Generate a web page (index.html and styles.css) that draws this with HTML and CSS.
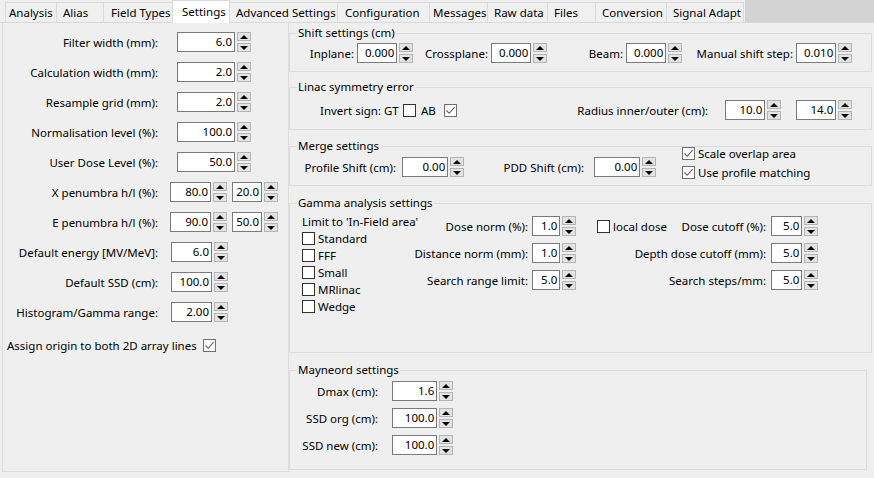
FILE: index.html
```html
<!DOCTYPE html>
<html>
<head>
<meta charset="utf-8">
<title>Settings</title>
<link rel="stylesheet" href="styles.css">
</head>
<body>
<div class="window">
  <div class="tabs">
    <div class="tab tight">Analysis</div>
    <div class="tab">Alias</div>
    <div class="tab pad8">Field Types</div>
    <div class="tab active">Settings</div>
    <div class="tab">Advanced Settings</div>
    <div class="tab pad8">Configuration</div>
    <div class="tab tight">Messages</div>
    <div class="tab">Raw data</div>
    <div class="tab">Files</div>
    <div class="tab">Conversion</div>
    <div class="tab">Signal Adapt</div>
    <div class="tab-fill"></div>
  </div>

  <div class="page">
    <div class="left-panel">
      <div class="form-grid">
        <div class="lbl">Filter width (mm):</div>
        <div class="spin w58 ml19"><div class="box">6.0</div><div class="arrows"><span class="up"></span><span class="dn"></span></div></div>

        <div class="lbl">Calculation width (mm):</div>
        <div class="spin w58 ml19"><div class="box">2.0</div><div class="arrows"><span class="up"></span><span class="dn"></span></div></div>

        <div class="lbl">Resample grid (mm):</div>
        <div class="spin w58 ml19"><div class="box">2.0</div><div class="arrows"><span class="up"></span><span class="dn"></span></div></div>

        <div class="lbl">Normalisation level (%):</div>
        <div class="spin w58 ml19"><div class="box">100.0</div><div class="arrows"><span class="up"></span><span class="dn"></span></div></div>

        <div class="lbl">User Dose Level (%):</div>
        <div class="spin w58 ml19"><div class="box">50.0</div><div class="arrows"><span class="up"></span><span class="dn"></span></div></div>

        <div class="lbl">X penumbra h/l (%):</div>
        <div class="pair ml12">
          <div class="spin w41"><div class="box">80.0</div><div class="arrows"><span class="up"></span><span class="dn"></span></div></div>
          <div class="spin w30"><div class="box">20.0</div><div class="arrows"><span class="up"></span><span class="dn"></span></div></div>
        </div>

        <div class="lbl">E penumbra h/l (%):</div>
        <div class="pair ml12">
          <div class="spin w41"><div class="box">90.0</div><div class="arrows"><span class="up"></span><span class="dn"></span></div></div>
          <div class="spin w30"><div class="box">50.0</div><div class="arrows"><span class="up"></span><span class="dn"></span></div></div>
        </div>

        <div class="lbl">Default energy [MV/MeV]:</div>
        <div class="spin w41 ml13"><div class="box">6.0</div><div class="arrows"><span class="up"></span><span class="dn"></span></div></div>

        <div class="lbl">Default SSD (cm):</div>
        <div class="spin w41 ml13"><div class="box">100.0</div><div class="arrows"><span class="up"></span><span class="dn"></span></div></div>

        <div class="lbl">Histogram/Gamma range:</div>
        <div class="spin w41 ml13"><div class="box">2.00</div><div class="arrows"><span class="up"></span><span class="dn"></span></div></div>
      </div>
      <div class="assign">
        <span>Assign origin to both 2D array lines</span>
        <span class="cb on"><svg viewBox="0 0 11 11" width="11" height="11"><path d="M1.5 5.5 L4.2 8.3 L9.6 2.2" fill="none" stroke="#5f5f5f" stroke-width="1.1"/></svg></span>
      </div>
    </div>

    <div class="right-col">
      <fieldset class="group shift">
        <legend>Shift settings (cm)</legend>
        <div class="row shift-row">
          <div class="lbl-r p3">Inplane:</div>
          <div class="spin w41"><div class="box">0.000</div><div class="arrows"><span class="up"></span><span class="dn"></span></div></div>
          <div class="lbl-r p3">Crossplane:</div>
          <div class="spin w41"><div class="box">0.000</div><div class="arrows"><span class="up"></span><span class="dn"></span></div></div>
          <div class="lbl-r p3">Beam:</div>
          <div class="spin w41"><div class="box">0.000</div><div class="arrows"><span class="up"></span><span class="dn"></span></div></div>
          <div class="lbl-r p3">Manual shift step:</div>
          <div class="spin w41"><div class="box">0.010</div><div class="arrows"><span class="up"></span><span class="dn"></span></div></div>
        </div>
      </fieldset>

      <fieldset class="group linac">
        <legend>Linac symmetry error</legend>
        <div class="row linac-row">
          <div class="invert">Invert sign: GT</div>
          <span class="cb"></span>
          <div>AB</div>
          <span class="cb on"><svg viewBox="0 0 11 11" width="11" height="11"><path d="M1.5 5.5 L4.2 8.3 L9.6 2.2" fill="none" stroke="#5f5f5f" stroke-width="1.1"/></svg></span>
          <div class="lbl-r p17">Radius inner/outer (cm):</div>
          <div class="spin w41"><div class="box">10.0</div><div class="arrows"><span class="up"></span><span class="dn"></span></div></div>
          <div></div>
          <div class="spin w41"><div class="box">14.0</div><div class="arrows"><span class="up"></span><span class="dn"></span></div></div>
        </div>
      </fieldset>

      <fieldset class="group merge">
        <legend>Merge settings</legend>
        <div class="row merge-row">
          <div class="lbl-r p6">Profile Shift (cm):</div>
          <div class="spin w47"><div class="box">0.00</div><div class="arrows"><span class="up"></span><span class="dn"></span></div></div>
          <div class="lbl-r p10">PDD Shift (cm):</div>
          <div class="spin w47"><div class="box">0.00</div><div class="arrows"><span class="up"></span><span class="dn"></span></div></div>
          <div></div>
          <div class="checks">
            <div class="check-line"><span class="cb on"><svg viewBox="0 0 11 11" width="11" height="11"><path d="M1.5 5.5 L4.2 8.3 L9.6 2.2" fill="none" stroke="#5f5f5f" stroke-width="1.1"/></svg></span><span>Scale overlap area</span></div>
            <div class="check-line"><span class="cb on"><svg viewBox="0 0 11 11" width="11" height="11"><path d="M1.5 5.5 L4.2 8.3 L9.6 2.2" fill="none" stroke="#5f5f5f" stroke-width="1.1"/></svg></span><span>Use profile matching</span></div>
          </div>
        </div>
      </fieldset>

      <fieldset class="group gamma">
        <legend>Gamma analysis settings</legend>
        <div class="gamma-body">
          <div class="limit-list">
            <div class="check-line">Limit to 'In-Field area'</div>
            <div class="check-line"><span class="cb"></span><span>Standard</span></div>
            <div class="check-line"><span class="cb"></span><span>FFF</span></div>
            <div class="check-line"><span class="cb"></span><span>Small</span></div>
            <div class="check-line"><span class="cb"></span><span>MRlinac</span></div>
            <div class="check-line"><span class="cb"></span><span>Wedge</span></div>
          </div>
          <div class="gamma-grid">
            <div class="lbl-r p4">Dose norm (%):</div>
            <div class="spin w29"><div class="box">1.0</div><div class="arrows"><span class="up"></span><span class="dn"></span></div></div>
            <div class="local"><span class="cb"></span><span>local dose</span></div>
            <div class="lbl-r p5">Dose cutoff (%):</div>
            <div class="spin w32"><div class="box">5.0</div><div class="arrows"><span class="up"></span><span class="dn"></span></div></div>

            <div class="lbl-r p4">Distance norm (mm):</div>
            <div class="spin w29"><div class="box">1.0</div><div class="arrows"><span class="up"></span><span class="dn"></span></div></div>
            <div class="lbl-r p5 span2">Depth dose cutoff (mm):</div>
            <div class="spin w32"><div class="box">5.0</div><div class="arrows"><span class="up"></span><span class="dn"></span></div></div>

            <div class="lbl-r p4">Search range limit:</div>
            <div class="spin w29"><div class="box">5.0</div><div class="arrows"><span class="up"></span><span class="dn"></span></div></div>
            <div class="lbl-r p5 span2">Search steps/mm:</div>
            <div class="spin w32"><div class="box">5.0</div><div class="arrows"><span class="up"></span><span class="dn"></span></div></div>
          </div>
        </div>
      </fieldset>

      <fieldset class="group mayneord">
        <legend>Mayneord settings</legend>
        <div class="may-grid">
          <div class="lbl-r p14">Dmax (cm):</div>
          <div class="spin w46"><div class="box">1.6</div><div class="arrows"><span class="up"></span><span class="dn"></span></div></div>
          <div class="lbl-r p14">SSD org (cm):</div>
          <div class="spin w46"><div class="box">100.0</div><div class="arrows"><span class="up"></span><span class="dn"></span></div></div>
          <div class="lbl-r p14">SSD new (cm):</div>
          <div class="spin w46"><div class="box">100.0</div><div class="arrows"><span class="up"></span><span class="dn"></span></div></div>
        </div>
      </fieldset>
    </div>
  </div>
</div>
</body>
</html>
```

FILE: styles.css
```css
* { box-sizing: border-box; }

html, body {
  margin: 0;
  padding: 0;
}

body {
  background: #efefef;
  font-family: "Noto Sans", "Open Sans", sans-serif;
  font-size: 11.5px;
  color: #000;
  width: 874px;
  height: 478px;
  overflow: hidden;
}

.window {
  display: flex;
  flex-direction: column;
  height: 478px;
}

/* ---------- tabs ---------- */
.tabs {
  display: grid;
  grid-template-columns: 52px 47px 69px 57px 108px 92px 58px 60px 48px 71px 77px 1fr;
  height: 23px;
  padding-left: 5px;
  align-items: end;
  border-bottom: 1px solid #d9d9d9;
  background: #efefef;
}

.tab {
  height: 20px;
  line-height: 19px;
  padding-left: 6px;
  white-space: nowrap;
  overflow: hidden;
  background: #f0f0f0;
  border: 1px solid #d9d9d9;
  border-bottom: none;
  margin-left: -1px;
}

.tab:first-child { margin-left: 0; }
.tab.tight { padding-left: 3px; }
.tab.pad8 { padding-left: 7px; }

.tab.active {
  height: 23px;
  margin-bottom: -1px;
  background: #fff;
  line-height: 21px;
  padding-left: 9px;
}

.tab-fill {
  align-self: stretch;
  background: #d3d3d3;
  margin-left: 1px;
}

/* ---------- page ---------- */
.page {
  flex: 1;
  display: flex;
  align-items: stretch;
}

.left-panel {
  width: 287px;
  margin-left: 2px;
  margin-bottom: 6px;
  border: 1px solid #dcdcdc;
  border-top: none;
  padding-top: 9px;
}

.form-grid {
  display: grid;
  grid-template-columns: 155px auto;
  grid-auto-rows: 20px;
  row-gap: 10px;
  align-items: center;
  justify-items: start;
}

.lbl {
  justify-self: end;
  white-space: nowrap;
}

.ml19 { margin-left: 19px; }
.ml12 { margin-left: 12px; }
.ml13 { margin-left: 13px; }

.pair {
  display: flex;
  gap: 5px;
}

.assign {
  display: flex;
  align-items: center;
  gap: 6px;
  height: 20px;
  margin-top: 13px;
  padding-left: 4px;
  white-space: nowrap;
}

/* ---------- spin edit ---------- */
.spin {
  display: flex;
  align-items: center;
  gap: 2px;
  height: 20px;
}

.box {
  height: 20px;
  border: 1px solid #7a7a7a;
  background: #fff;
  text-align: right;
  padding-right: 2px;
  line-height: 18px;
  white-space: nowrap;
  overflow: hidden;
}

.w58 .box { width: 58px; }
.w47 .box { width: 47px; }
.w46 .box { width: 46px; }
.w41 .box { width: 41px; }
.w32 .box { width: 32px; }
.w30 .box { width: 30px; }
.w29 .box { width: 29px; }

.arrows {
  display: flex;
  flex-direction: column;
  gap: 2px;
  width: 14px;
}

.arrows span {
  display: flex;
  align-items: center;
  justify-content: center;
  height: 9px;
  background: #e3e3e3;
  border: 1px solid #b4b4b4;
}

.arrows .up::after {
  content: "";
  border-left: 4px solid transparent;
  border-right: 4px solid transparent;
  border-bottom: 4px solid #000;
}

.arrows .dn::after {
  content: "";
  border-left: 4px solid transparent;
  border-right: 4px solid transparent;
  border-top: 4px solid #000;
}

/* ---------- checkbox ---------- */
.cb {
  display: inline-flex;
  align-items: center;
  justify-content: center;
  flex: none;
  width: 13px;
  height: 13px;
  border: 1px solid #333;
  background: #fff;
}

.cb.on { border-color: #707070; }

.cb svg { display: block; }

/* ---------- group boxes ---------- */
.right-col {
  flex: 1;
  display: flex;
  flex-direction: column;
  padding-top: 3px;
  padding-right: 2px;
}

.group {
  margin: 0;
  padding: 0;
  border: 1px solid #dcdcdc;
  min-width: 0;
}

.group legend {
  margin-left: 7px;
  padding: 0 1px;
  line-height: 14px;
  height: 14px;
}

.group.shift { padding: 3px 0 8px; }
.group.linac { padding: 6px 0 9px; margin-top: 8px; }
.group.merge { padding: 4px 0 3px; margin-top: 9px; }
.group.gamma { padding: 0 0 37px; margin-top: 10px; }
.group.mayneord { padding: 4px 0 14px; margin-top: 10px; margin-right: 5px; }

.row {
  display: grid;
  grid-auto-rows: 20px;
  align-items: center;
}

.lbl-r {
  display: flex;
  justify-content: flex-end;
  align-items: center;
  white-space: nowrap;
}

.p3 { padding-right: 3px; }
.p4 { padding-right: 4px; }
.p5 { padding-right: 5px; }
.p6 { padding-right: 6px; }
.p10 { padding-right: 10px; }
.p14 { padding-right: 14px; }
.p17 { padding-right: 17px; }

.shift-row {
  grid-template-columns: 67px 56px 78px 56px 79px 56px 114px 56px;
}

.linac-row {
  grid-template-columns: 113px 18px 23px 13px 268px 56px 15px 56px;
}

.invert {
  padding-left: 30px;
  white-space: nowrap;
}

.merge-row {
  grid-template-columns: 112px 62px 130px 62px 26px auto;
  grid-auto-rows: auto;
  align-items: start;
}

.merge-row .spin,
.merge-row .lbl-r { height: 20px; }

.checks {
  display: flex;
  flex-direction: column;
  margin-top: -13px;
}

.check-line {
  display: flex;
  align-items: center;
  gap: 3px;
  height: 19px;
  white-space: nowrap;
}

.gamma-body {
  display: flex;
  align-items: flex-start;
}

.limit-list {
  width: 130px;
  padding-left: 12px;
  margin-top: 3px;
}

.limit-list .check-line { height: 17px; }

.gamma-grid {
  display: grid;
  grid-template-columns: 112px 44px 95px 100px 47px;
  grid-auto-rows: 20px;
  row-gap: 7px;
  align-items: center;
  padding-top: 6px;
}

.span2 { grid-column: 3 / 5; }

.local {
  display: flex;
  align-items: center;
  gap: 3px;
  padding-left: 21px;
  white-space: nowrap;
}

.may-grid {
  display: grid;
  grid-template-columns: 102px 61px;
  grid-auto-rows: 20px;
  row-gap: 7px;
  align-items: center;
}
```
